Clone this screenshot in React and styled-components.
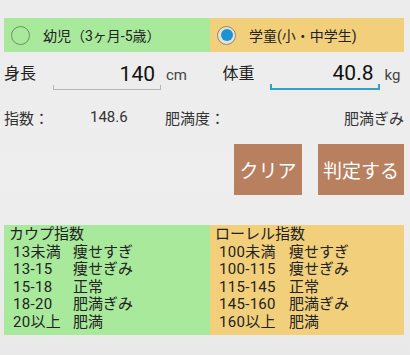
import React from 'react';
import styled, { createGlobalStyle } from 'styled-components';

const GlobalStyle = createGlobalStyle`
  body {
    margin: 0;
    background: #ebebeb;
    font-family: Roboto, "Noto Sans CJK JP", sans-serif;
    color: #222;
  }
`;

const Page = styled.div`
  width: 410px;
  height: 355px;
  box-sizing: border-box;
  padding: 18px 6px 0 4px;
  background: linear-gradient(180deg, #ececec 0%, #eeeeee 50%, #e9e9e9 100%);
  overflow: hidden;
`;

const Split = styled.div`
  display: grid;
  grid-template-columns: 206px 194px;
`;

const RadioCell = styled.div`
  display: flex;
  align-items: center;
  height: 34px;
  padding-left: 8px;
  background: ${p => (p.$tone === 'green' ? '#a9e99b' : '#f2d07b')};
  font-size: 14px;
`;

const RadioMark = styled.span`
  width: 19px;
  height: 19px;
  border-radius: 50%;
  box-sizing: border-box;
  border: 1.5px solid ${p => (p.$on ? '#8a8a7a' : '#6e8f6a')};
  display: flex;
  align-items: center;
  justify-content: center;
  margin-right: 13px;
  margin-left: -1px;
  background: ${p => (p.$on ? '#e8e2d0' : 'transparent')};

  &::after {
    content: '';
    display: ${p => (p.$on ? 'block' : 'none')};
    width: 12px;
    height: 12px;
    border-radius: 50%;
    background: #1b93d6;
  }
`;

const FieldRow = styled.div`
  display: flex;
  align-items: flex-end;
  height: 40px;
`;

const Label = styled.span`
  width: ${p => p.$w}px;
  font-size: 16px;
  padding-bottom: 8px;
`;

const Field = styled.div`
  position: relative;
  width: ${p => p.$w}px;
  box-sizing: border-box;
  text-align: right;
  padding-right: 6px;
  font-size: 21px;
  line-height: 30px;
  color: #111;
  border-bottom: ${p => (p.$focus ? '2px solid #2ea3c8' : '1.5px solid #b5b5b5')};
  margin-bottom: 2px;

  &::before,
  &::after {
    content: '';
    position: absolute;
    bottom: 0;
    width: 1.5px;
    height: 4px;
    background: ${p => (p.$focus ? '#2ea3c8' : '#b5b5b5')};
  }
  &::before { left: 0; }
  &::after { right: 0; }
`;

const Unit = styled.span`
  width: ${p => p.$w}px;
  padding-left: 5px;
  font-size: 15px;
  color: #444;
  padding-bottom: 8px;
`;

const ResultRow = styled.div`
  display: flex;
  align-items: center;
  height: 34px;
  margin-top: 8px;
  font-size: 15px;
  color: #333;
`;

const ResultText = styled.span`
  width: ${p => (p.$w ? `${p.$w}px` : 'auto')};
  flex: ${p => (p.$grow ? 1 : 'none')};
  text-align: ${p => (p.$right ? 'right' : 'left')};
`;

const Buttons = styled.div`
  display: flex;
  justify-content: flex-end;
  gap: 16px;
  margin-top: 10px;
`;

const Button = styled.button`
  height: 51px;
  padding: 0 ${p => p.$pad}px;
  border: none;
  background: #b9805f;
  color: #fff;
  font-family: inherit;
  font-size: 19px;
`;

const Table = styled.div`
  margin-top: 30px;
  display: grid;
  grid-template-columns: 206px 194px;
`;

const Column = styled.div`
  background: ${p => (p.$tone === 'green' ? '#a9e99b' : '#f2d07b')};
  padding: 1px 0 3px 5px;
  font-size: 15px;
  line-height: 17.6px;
  color: #222;
`;

const Title = styled.div``;

const Line = styled.div`
  display: flex;
  padding-left: 4px;
`;

const Range = styled.span`
  width: ${p => p.$w}px;
  letter-spacing: 0.3px;
`;

const kaup = [
  ['13未満', '痩せすぎ'],
  ['13-15', '痩せぎみ'],
  ['15-18', '正常'],
  ['18-20', '肥満ぎみ'],
  ['20以上', '肥満'],
];

const rohrer = [
  ['100未満', '痩せすぎ'],
  ['100-115', '痩せぎみ'],
  ['115-145', '正常'],
  ['145-160', '肥満ぎみ'],
  ['160以上', '肥満'],
];

export default function App() {
  return (
    <>
      <GlobalStyle />
      <Page>
        <Split>
          <RadioCell $tone="green">
            <RadioMark />
            幼児（3ヶ月-5歳）
          </RadioCell>
          <RadioCell $tone="orange">
            <RadioMark $on />
            学童(小・中学生)
          </RadioCell>
        </Split>

        <FieldRow>
          <Label $w={50}>身長</Label>
          <Field $w={111}>140</Field>
          <Unit $w={58}>cm</Unit>
          <Label $w={49}>体重</Label>
          <Field $w={112} $focus>40.8</Field>
          <Unit $w={20}>kg</Unit>
        </FieldRow>

        <ResultRow>
          <ResultText $w={86}>指数：</ResultText>
          <ResultText $w={75}>148.6</ResultText>
          <ResultText>肥満度：</ResultText>
          <ResultText $grow $right>肥満ぎみ</ResultText>
        </ResultRow>

        <Buttons>
          <Button $pad={5.5}>クリア</Button>
          <Button $pad={5}>判定する</Button>
        </Buttons>

        <Table>
          <Column $tone="green">
            <Title>カウプ指数</Title>
            {kaup.map(([r, t]) => (
              <Line key={r}>
                <Range $w={60}>{r}</Range>
                <span>{t}</span>
              </Line>
            ))}
          </Column>
          <Column $tone="orange">
            <Title>ローレル指数</Title>
            {rohrer.map(([r, t]) => (
              <Line key={r}>
                <Range $w={70}>{r}</Range>
                <span>{t}</span>
              </Line>
            ))}
          </Column>
        </Table>
      </Page>
    </>
  );
}
